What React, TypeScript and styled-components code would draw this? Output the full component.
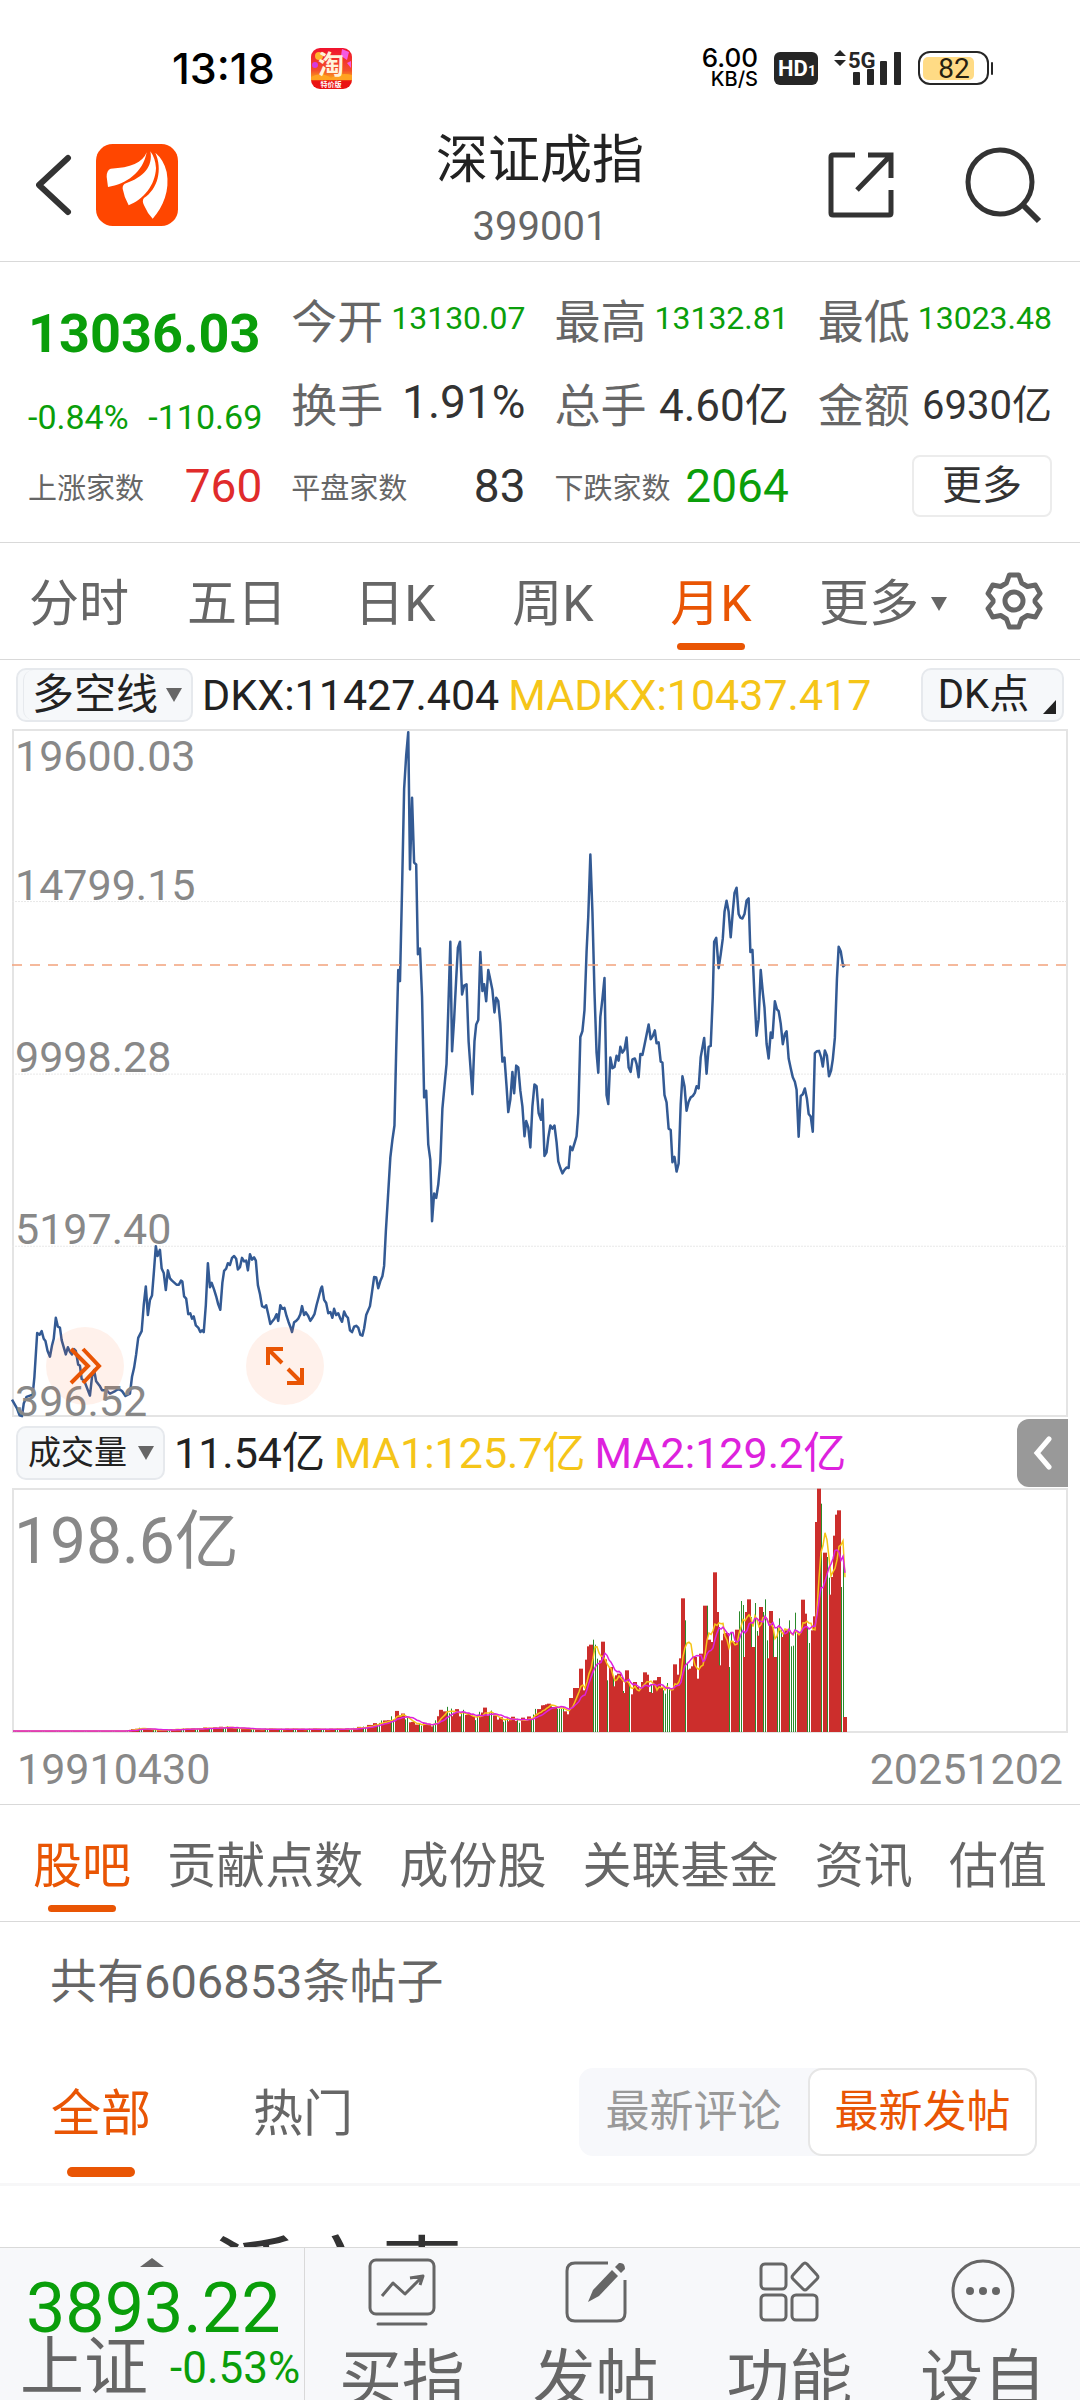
import React from "react";
import styled, { createGlobalStyle, css } from "styled-components";

const color = {
  ink: "#222222",
  dark: "#333333",
  mid: "#666666",
  soft: "#888888",
  faint: "#999999",
  green: "#0a9e0a",
  red: "#e02b2b",
  accent: "#e95504",
  gold: "#f5c518",
  magenta: "#dd22dd",
  line: "#d9d9d9",
  frame: "#e4e4e4",
  panel: "#f7f8fa",
};

const GlobalStyle = createGlobalStyle`
  *, *::before, *::after { box-sizing: border-box; }
  body {
    margin: 0;
    background: #fff;
    color: ${color.dark};
    font-family: Roboto, "Noto Sans CJK SC", sans-serif;
  }
  button, select {
    margin: 0;
    padding: 0;
    border: 0;
    background: none;
    color: inherit;
    font: inherit;
    cursor: pointer;
  }
  a { color: inherit; text-decoration: none; }
  svg { display: block; flex: none; }
  h1, h2, p, dl, dd { margin: 0; font-weight: 400; }
`;

const Shell = styled.div`
  display: flex;
  flex-direction: column;
  height: 100vh;
  overflow: hidden;
`;

/* ---------- status bar ---------- */

const StatusBar = styled.div`
  display: flex;
  flex: none;
  justify-content: space-between;
  align-items: center;
  height: 100px;
  padding: 36px 86px 0 172px;
  color: #000;
  font-family: Inter, "Noto Sans CJK SC", sans-serif;
`;

const StatusGroup = styled.div<{ $gap: number }>`
  display: flex;
  align-items: center;
  gap: ${(p) => p.$gap}px;
`;

const Clock = styled.span`
  font-size: 43px;
  font-weight: 500;
  line-height: 48px;
`;

const NetSpeed = styled.span`
  display: flex;
  flex-direction: column;
  align-items: flex-end;
  font-size: 26px;
  font-weight: 500;
  line-height: 22px;
  small {
    font-size: 20px;
    line-height: 20px;
  }
`;

/* ---------- title bar ---------- */

const Header = styled.header`
  display: grid;
  flex: none;
  grid-template-columns: 1fr auto 1fr;
  height: 162px;
  padding: 22px 36px 0;
  border-bottom: 1px solid ${color.line};
`;

const HeaderSide = styled.div<{ $end?: boolean }>`
  display: flex;
  align-items: center;
  justify-content: ${(p) => (p.$end ? "flex-end" : "flex-start")};
  gap: ${(p) => (p.$end ? 69 : 24)}px;
  height: 126px;
`;

const TitleBlock = styled.div`
  text-align: center;
`;

const Title = styled.h1`
  color: ${color.ink};
  font-size: 52px;
  line-height: 78px;
`;

const Code = styled.p`
  color: ${color.mid};
  font-size: 40px;
  line-height: 54px;
`;

/* ---------- quote ---------- */

const Quote = styled.section`
  display: grid;
  flex: none;
  grid-template-columns: repeat(4, minmax(0, 1fr));
  grid-template-rows: repeat(3, 84px);
  column-gap: 29px;
  padding: 14px 28px;
  border-bottom: 1px solid ${color.line};
`;

const PriceCell = styled.div`
  display: flex;
  flex-direction: column;
  grid-row: span 2;
  justify-content: space-between;
  padding: 20px 0 7px;
  color: ${color.green};
`;

const Price = styled.strong`
  font-size: 54px;
  font-weight: 700;
  line-height: 76px;
`;

const Change = styled.div`
  display: flex;
  justify-content: space-between;
  font-size: 34px;
  line-height: 40px;
`;

const Stat = styled.div`
  display: flex;
  align-items: center;
  justify-content: space-between;
  white-space: nowrap;
`;

const StatName = styled.span<{ $small?: boolean }>`
  color: ${color.mid};
  font-size: ${(p) => (p.$small ? 29 : 46)}px;
`;

const StatValue = styled.span<{ $size: number; $tone: string }>`
  color: ${(p) => p.$tone};
  font-size: ${(p) => p.$size}px;
`;

const MoreButton = styled.button`
  align-self: center;
  justify-self: end;
  width: 140px;
  height: 62px;
  border: 2px solid #ececec;
  border-radius: 8px;
  font-size: 40px;
  line-height: 56px;
`;

/* ---------- tab bars ---------- */

const activeBar = css`
  &::after {
    content: "";
    position: absolute;
    left: 50%;
    bottom: 0;
    width: 68px;
    height: 7px;
    margin-left: -34px;
    border-radius: 4px;
    background: ${color.accent};
  }
`;

const Periods = styled.nav`
  display: grid;
  flex: none;
  grid-template-columns: repeat(6, minmax(0, 158fr)) minmax(0, 132fr);
  align-items: center;
  height: 117px;
  border-bottom: 1px solid ${color.line};
`;

const Period = styled.button<{ $active?: boolean }>`
  position: relative;
  height: 98px;
  padding-top: 6px;
  color: ${(p) => (p.$active ? color.accent : color.mid)};
  font-size: 50px;
  line-height: 92px;
  white-space: nowrap;
  ${(p) => p.$active && activeBar}
`;

const MorePeriods = styled(Period)`
  display: flex;
  align-items: center;
  justify-content: center;
  gap: 12px;
  padding-left: 28px;
`;

const SettingsButton = styled.button`
  display: flex;
  justify-content: center;
`;

const Triangle = styled.i`
  width: 0;
  height: 0;
  border: 8px solid transparent;
  border-top: 14px solid ${color.mid};
  border-bottom: 0;
`;

/* ---------- chart ---------- */

const IndicatorRow = styled.div<{ $height: number }>`
  display: flex;
  flex: none;
  align-items: center;
  gap: 9px;
  height: ${(p) => p.$height}px;
  padding: 0 16px;
  color: ${color.ink};
  font-size: 43px;
  line-height: 56px;
  white-space: nowrap;
`;

const chip = css`
  border: 2px solid #e6e9ed;
  border-radius: 10px;
  background: #f6f8fa;
`;

const Picker = styled.label<{ $nested?: boolean }>`
  ${chip}
  display: flex;
  position: relative;
  align-items: center;
  height: 54px;
  padding-left: ${(p) => (p.$nested ? 5 : 0)}px;
  ${Triangle} {
    position: absolute;
    right: 9px;
    pointer-events: none;
  }
`;

const PickerSelect = styled.select<{ $nested?: boolean }>`
  appearance: none;
  height: 50px;
  padding: ${(p) => (p.$nested ? "0 32px 0 8px" : "0 36px 0 10px")};
  border-left: ${(p) => (p.$nested ? "1px solid #e6e9ed" : "0")};
  border-radius: 10px;
  color: ${color.ink};
  font-size: ${(p) => (p.$nested ? 42 : 33)}px;
  line-height: 50px;
`;

const Reading = styled.span<{ $tone: string }>`
  color: ${(p) => p.$tone};
`;

const DkButton = styled.button`
  ${chip}
  position: relative;
  width: 143px;
  height: 54px;
  margin-left: auto;
  padding-right: 18px;
  font-size: 40px;
  line-height: 50px;
  &::after {
    content: "";
    position: absolute;
    right: 6px;
    bottom: 6px;
    border-left: 13px solid transparent;
    border-bottom: 14px solid ${color.ink};
  }
`;

const Frame = styled.div<{ $height: number }>`
  position: relative;
  flex: none;
  height: ${(p) => p.$height}px;
  margin: 0 12px;
  box-shadow: inset 0 0 0 2px ${color.frame};
  > svg {
    width: 100%;
    height: 100%;
    overflow: visible;
  }
`;

const AxisLabel = styled.span<{ $level: number }>`
  position: absolute;
  left: 3px;
  ${(p) => (p.$level === 4 ? "top: 11px;" : `bottom: ${p.$level * 25}%;`)}
  color: ${color.soft};
  font-size: 43px;
  line-height: 32px;
`;

const VolumeLabel = styled.span`
  position: absolute;
  top: 19px;
  left: 2px;
  color: ${color.soft};
  font-size: 64px;
  line-height: 70px;
`;

const ChartTools = styled.div`
  display: flex;
  position: absolute;
  bottom: 12px;
  left: 34px;
  gap: 122px;
`;

const RoundTool = styled.button`
  display: grid;
  place-items: center;
  width: 78px;
  height: 78px;
  border-radius: 50%;
  background: rgba(255, 98, 30, 0.09);
`;

const Drawer = styled.button`
  display: grid;
  place-items: center;
  width: 51px;
  height: 68px;
  margin: 0 -4px 0 auto;
  border-radius: 12px 0 0 12px;
  background: ${color.faint};
`;

const Dates = styled.div`
  display: flex;
  flex: none;
  justify-content: space-between;
  height: 72px;
  padding: 6px 17px 0;
  border-bottom: 1px solid ${color.line};
  color: ${color.soft};
  font-size: 43px;
  line-height: 60px;
`;

/* ---------- community ---------- */

const Sections = styled.nav`
  display: flex;
  flex: none;
  justify-content: space-between;
  height: 117px;
  padding: 10px 33px 9px;
  border-bottom: 1px solid ${color.line};
`;

const SectionTab = styled.button<{ $active?: boolean }>`
  position: relative;
  padding-top: 7px;
  color: ${(p) => (p.$active ? color.accent : color.mid)};
  font-size: 49px;
  line-height: 90px;
  white-space: nowrap;
  ${(p) => p.$active && activeBar}
`;

const PostCount = styled.p`
  flex: none;
  padding: 26px 50px 0;
  color: ${color.mid};
  font-size: 47px;
  line-height: 68px;
`;

const Filters = styled.div`
  display: flex;
  flex: none;
  align-items: center;
  gap: 102px;
  height: 170px;
  padding: 24px 43px 0 51px;
  border-bottom: 3px solid #f7f7f8;
`;

const FilterTab = styled.button<{ $active?: boolean }>`
  position: relative;
  height: 130px;
  padding-top: 4px;
  color: ${(p) => (p.$active ? color.accent : color.mid)};
  font-size: 50px;
  line-height: 126px;
  ${(p) => p.$active && activeBar}
  &::after {
    height: 10px;
    border-radius: 5px;
  }
`;

const SortSwitch = styled.div`
  display: flex;
  height: 88px;
  margin-left: auto;
  border-radius: 14px;
  background: #f7f8fb;
`;

const SortOption = styled.button<{ $active?: boolean }>`
  width: 229px;
  border: 2px solid ${(p) => (p.$active ? "#e6e6e6" : "transparent")};
  border-radius: 14px;
  background: ${(p) => (p.$active ? "#fff" : "transparent")};
  color: ${(p) => (p.$active ? color.accent : color.faint)};
  font-size: 44px;
  line-height: 80px;
`;

const Feed = styled.main`
  flex: 1;
  min-height: 0;
  overflow: hidden;
  padding: 42px 42px 0 212px;
`;

const Author = styled.h2`
  color: ${color.dark};
  font-size: 84px;
  line-height: 100px;
`;

/* ---------- bottom bar ---------- */

const BottomBar = styled.footer`
  display: flex;
  flex: none;
  height: 153px;
  overflow: hidden;
  border-top: 1px solid ${color.line};
  background: ${color.panel};
`;

const IndexCell = styled.button`
  display: flex;
  flex: none;
  flex-direction: column;
  align-items: flex-start;
  width: 305px;
  padding: 10px 0 0 20px;
  border-right: 1px solid ${color.line};
  white-space: nowrap;
`;

const UpCaret = styled.i`
  align-self: center;
  margin-right: 20px;
  border: 12px solid transparent;
  border-top: 0;
  border-bottom: 9px solid ${color.mid};
`;

const IndexValue = styled.span`
  margin: 11px 0 0 6px;
  color: ${color.green};
  font-size: 70px;
  line-height: 60px;
`;

const IndexLine = styled.span`
  display: flex;
  align-items: center;
  gap: 22px;
  color: ${color.mid};
  font-size: 64px;
  line-height: 60px;
  span {
    color: ${color.green};
    font-size: 44px;
  }
`;

const Action = styled.button`
  display: flex;
  flex: 1;
  flex-direction: column;
  align-items: center;
  justify-content: flex-start;
  gap: 22px;
  padding-top: 10px;
  color: ${color.mid};
  font-size: 63px;
  line-height: 64px;
`;

/* ---------- data ---------- */

// Monthly close, in plot units: x runs left to right, y downwards.
const PLOT = { x: 36, y: 21, width: 3062, height: 1539 };
const priceLine =
  "36,1521 50,1540 58,1556 65,1558 70,1530 78,1515 96,1510 101,1470 109,1372 116,1376 122,1368 128,1385 133,1390 139,1412 146,1425 152,1400 157,1385 163,1338 169,1358 175,1360 180,1388 192,1420 198,1404 204,1414 210,1420 216,1408 221,1412 228,1443 233,1445 238,1475 245,1478 262,1512 268,1470 274,1455 280,1480 290,1490 297,1500 310,1500 320,1508 335,1502 345,1497 355,1502 365,1513 378,1508 384,1470 390,1450 396,1420 402,1383 412,1368 418,1310 424,1268 430,1332 436,1298 442,1288 447,1240 453,1178 458,1200 465,1186 470,1228 476,1238 482,1276 488,1232 494,1250 500,1255 513,1264 520,1264 526,1255 530,1257 535,1290 541,1295 547,1330 553,1328 558,1340 563,1335 569,1355 576,1360 582,1370 587,1366 592,1370 598,1310 604,1216 610,1270 615,1260 622,1275 628,1290 634,1308 640,1320 646,1260 651,1233 657,1228 662,1216 668,1220 674,1204 680,1200 686,1206 691,1230 697,1225 703,1204 709,1212 715,1210 720,1232 726,1196 732,1208 738,1203 743,1210 749,1265 755,1285 761,1312 768,1315 773,1310 779,1330 785,1352 791,1346 797,1340 803,1330 808,1345 814,1310 820,1318 826,1316 832,1334 838,1348 843,1358 848,1370 854,1348 860,1345 866,1340 872,1330 877,1312 883,1332 888,1326 895,1334 901,1345 907,1338 913,1330 919,1310 926,1290 932,1272 935,1268 941,1298 947,1305 953,1328 959,1325 965,1338 970,1318 976,1332 982,1328 988,1340 993,1347 999,1324 1005,1334 1010,1338 1016,1366 1022,1370 1028,1358 1034,1356 1040,1360 1046,1376 1052,1378 1057,1362 1063,1332 1074,1312 1080,1280 1086,1247 1092,1248 1098,1272 1104,1256 1110,1245 1115,1222 1120,1145 1126,1070 1133,980 1139,940 1145,908 1150,740 1156,560 1161,585 1167,380 1173,155 1179,80 1185,28 1190,335 1196,175 1202,320 1208,324 1213,525 1219,512 1225,620 1231,845 1237,830 1243,950 1249,985 1254,1122 1260,1060 1266,1070 1272,1040 1278,990 1284,870 1290,820 1296,770 1301,650 1307,497 1312,742 1318,670 1324,580 1329,510 1335,497 1341,615 1347,595 1354,592 1360,720 1371,838 1377,720 1382,682 1388,672 1394,520 1400,607 1405,592 1411,630 1417,560 1423,582 1429,605 1435,655 1440,622 1446,630 1452,680 1458,765 1464,756 1470,820 1475,878 1481,850 1487,788 1492,836 1498,774 1504,778 1510,830 1516,865 1522,932 1527,898 1533,912 1539,957 1545,865 1551,816 1557,820 1563,880 " +
  "1570,895 1574,850 1580,976 1586,968 1591,935 1597,908 1603,915 1609,908 1615,945 1620,988 1626,1003 1632,1015 1638,1007 1644,1002 1650,1003 1655,955 1661,963 1667,948 1673,932 1678,880 1684,710 1690,697 1696,650 1702,520 1707,440 1713,302 1719,430 1725,610 1731,745 1736,790 1742,665 1748,625 1754,578 1760,840 1765,860 1771,756 1777,780 1783,777 1789,752 1795,763 1800,732 1806,745 1812,738 1818,711 1824,778 1830,788 1835,760 1842,758 1847,770 1853,800 1858,748 1864,750 1870,728 1876,705 1882,682 1888,715 1894,708 1900,695 1905,724 1911,722 1917,765 1922,767 1928,840 1934,856 1940,915 1946,918 1951,990 1957,978 1963,1011 1969,993 1975,860 1980,798 1986,820 1992,875 1998,855 2004,845 2010,842 2016,835 2021,820 2027,825 2033,755 2043,712 2050,792 2056,732 2062,730 2068,620 2072,497 2078,488 2085,556 2091,525 2097,490 2102,430 2108,405 2114,430 2120,487 2126,430 2131,388 2137,376 2143,435 2148,443 2154,445 2160,435 2166,405 2172,400 2177,520 2183,515 2189,620 2195,707 2201,670 2207,560 2213,610 2218,645 2224,725 2230,758 2236,700 2241,712 2248,630 2254,648 2259,652 2265,680 2271,726 2277,703 2282,697 2288,758 2294,780 2300,800 2306,810 2311,828 2317,933 2323,842 2329,838 2335,825 2341,848 2346,882 2352,888 2358,922 2364,746 2370,742 2376,741 2382,755 2387,776 2393,740 2399,752 2405,798 2411,785 2416,760 2422,712 2428,580 2433,508 2439,518 2446,552 2452,548";

const axis = [
  { level: 4, text: "19600.03" },
  { level: 3, text: "14799.15" },
  { level: 2, text: "9998.28" },
  { level: 1, text: "5197.40" },
  { level: 0, text: "396.52" },
];

type Bar = { height: number; up: boolean };

// Typical volume of the early years: [month index, bar height].
const earlyVolume: [number, number][] = [
  [0, 1], [55, 1], [64, 4], [72, 2], [98, 4], [106, 5], [120, 3], [135, 3], [150, 3],
  [165, 3], [172, 4], [181, 8], [187, 12], [192, 19], [197, 14], [201, 8], [210, 8],
  [214, 20], [219, 23], [225, 20], [229, 15], [236, 22], [243, 14], [252, 13],
  [258, 14], [262, 22], [266, 24],
];

// Recent volume, one entry a month; a negative value is a falling month.
const recentVolume = [
  80, 80, 83, 85, -77, 75, 73, -70, -70, -70, -75, 62, 53, -60, 102, -107, 132, 125, 132, 190,
  125, 87, 217, 257, 262, -277, -262, -220, -165, 215, 271, 218, -155, -117, 195, -165, 137,
  170, 175, 165, -123, 117, 185, -143, -95, 113, 150, 135, -125, 130, 150, 179, 172, 120, -143,
  117, 155, 93, 165, 135, -125, -115, -147, -130, -113, 130, 203, -135, 172, 221, 401, -335,
  -205, 187, 190, 197, 225, 160, -167, 235, -215, 379, -379, 277, -213, 270, 479, 360, -315,
  200, 275, 295, 297, -195, -300, 270, 245, 307, -362, -393, -381, 225, 360, 398, -345, 255,
  -387, -303, 289, 375, -360, -398, -275, 221, 363, -315, 225, -315, -341, -305, 285, 300, 305,
  -335, -257, -259, -358, -290, 295, 300, 397, 355, -315, -267, -297, 305, 347, 630, 730, -685,
  -405, 538, -525, -463, 412, 465, 589, 652, 665, -435, -525, 45,
];

function buildVolume(): Bar[] {
  const bars: Bar[] = [];
  for (let month = 0; month < 265; month++) {
    const next = earlyVolume.findIndex(([m]) => m > month);
    const [m0, v0] = earlyVolume[next - 1];
    const [m1, v1] = earlyVolume[next];
    const base = v0 + ((v1 - v0) * (month - m0)) / (m1 - m0);
    const swing = 0.7 + (((month * 37) % 11) / 11) * 0.5;
    bars.push({ height: Math.max(1, base * swing), up: (month * 29) % 7 > 2 });
  }
  recentVolume.forEach((v) => bars.push({ height: Math.abs(v) / 3, up: v > 0 }));
  return bars;
}

const volume = buildVolume();

function average(span: number) {
  return volume
    .map((_, i) => {
      const part = volume.slice(Math.max(0, i - span + 1), i + 1);
      const mean = part.reduce((sum, bar) => sum + bar.height, 0) / part.length;
      return `${i * 2 + 1},${(244 - mean).toFixed(1)}`;
    })
    .join(" ");
}

const stats = [
  { name: "今开", value: "13130.07", size: 32, tone: color.green },
  { name: "最高", value: "13132.81", size: 32, tone: color.green },
  { name: "最低", value: "13023.48", size: 32, tone: color.green },
  { name: "换手", value: "1.91%", size: 46, tone: color.dark },
  { name: "总手", value: "4.60亿", size: 44, tone: color.dark },
  { name: "金额", value: "6930亿", size: 40, tone: color.dark },
  { name: "上涨家数", value: "760", size: 46, tone: color.red, small: true },
  { name: "平盘家数", value: "83", size: 46, tone: color.dark, small: true },
  { name: "下跌家数", value: "2064", size: 46, tone: color.green, small: true },
];

const periods = ["分时", "五日", "日K", "周K", "月K"];
const sections = ["股吧", "贡献点数", "成份股", "关联基金", "资讯", "估值"];

/* ---------- icons ---------- */

const ShoppingBadge = () => (
  <svg width="41" height="41" viewBox="0 0 41 41" aria-hidden="true">
    <defs>
      <linearGradient id="badge" x1="0" y1="0" x2="0" y2="1">
        <stop offset="0" stopColor="#f0122d" />
        <stop offset="0.55" stopColor="#f4502a" />
        <stop offset="0.72" stopColor="#f99a1c" />
        <stop offset="0.82" stopColor="#ea1212" />
      </linearGradient>
    </defs>
    <rect width="41" height="41" rx="9" fill="url(#badge)" />
    <circle cx="8" cy="8" r="4" fill="#ffb52e" />
    <circle cx="4" cy="17" r="3" fill="#d43be0" />
    <path d="M31 1l7 3-2 8-6-4zM36 15l4-2v7z" fill="#f55be0" />
    <path d="M0 29q10-6 20 1 10-6 21-3v5H0z" fill="#ffa321" />
    <text x="20" y="26" fontSize="26" fontWeight="700" textAnchor="middle" fill="#fff3dc">淘</text>
    <text x="20" y="39" fontSize="7" fontWeight="700" textAnchor="middle" fill="#fff">特价版</text>
  </svg>
);

const HdIcon = () => (
  <svg width="44" height="33" viewBox="0 0 44 33" aria-hidden="true">
    <rect width="44" height="33" rx="6" fill="#262626" />
    <text x="4" y="24" fontFamily="Roboto" fontSize="22" fontWeight="700" fill="#fff">HD</text>
    <text x="34" y="24" fontFamily="Roboto" fontSize="14" fontWeight="700" fill="#fff">1</text>
  </svg>
);

const SignalIcon = () => (
  <svg width="68" height="38" viewBox="0 0 68 38" fill="#262626" aria-hidden="true">
    <path d="M0 7l6-6 6 6zM0 11h12l-6 6z" />
    <text x="14" y="19" fontFamily="Roboto" fontSize="22" fontWeight="700">5G</text>
    <rect x="19" y="23" width="7" height="13" rx="1" />
    <rect x="33" y="20" width="7" height="16" rx="1" />
    <rect x="46" y="12" width="7" height="24" rx="1" />
    <rect x="60" y="3" width="7" height="33" rx="1" />
  </svg>
);

const BatteryIcon = () => (
  <svg width="76" height="34" viewBox="0 0 76 34" aria-hidden="true">
    <rect x="1" y="1" width="69" height="32" rx="11" fill="none" stroke="#262626" strokeWidth="2" />
    <rect x="5" y="6" width="51" height="23" rx="5" fill="#ffdb85" />
    <rect x="73" y="11" width="2" height="13" rx="1" fill="#262626" />
    <text x="36" y="27" fontFamily="Roboto" fontSize="28" textAnchor="middle" fill="#262011">82</text>
  </svg>
);

const BackIcon = () => (
  <svg width="36" height="62" viewBox="2 0 36 62" fill="none" stroke={color.dark} strokeWidth="6" strokeLinecap="round" strokeLinejoin="round">
    <path d="M34 4L5 31l29 27" />
  </svg>
);

const AppLogo = () => (
  <svg width="82" height="82" viewBox="0 0 246 246" role="img" aria-label="东方财富">
    <rect width="246" height="246" rx="50" fill="#ff4600" />
    <g fill="#fff">
      <path d="M152 25C140 56 104 72 44 74Q32 78 32 98L36 129C90 122 142 84 152 25z" />
      <path d="M163 22C172 68 142 100 90 118Q79 122 80 134Q84 158 98 184C142 166 178 124 180 72Q178 42 163 22z" />
      <path d="M178 26C200 76 186 134 144 162Q137 170 144 184Q154 208 170 224C202 188 222 140 212 84Q204 48 178 26z" />
    </g>
  </svg>
);

const ShareIcon = () => (
  <svg width="68" height="68" viewBox="0 0 68 68" fill="none" stroke={color.dark} strokeWidth="5">
    <path d="M28 4H6Q4 4 4 6v56q0 2 2 2h56q2 0 2-2V39" />
    <path d="M41 4h23v23M63 5L30 39" />
  </svg>
);

const SearchIcon = () => (
  <svg width="80" height="80" viewBox="0 0 80 80" fill="none" stroke={color.dark} strokeWidth="5">
    <circle cx="36" cy="37" r="32" />
    <path d="M59 60l16 16" strokeWidth="6" />
  </svg>
);

const GearIcon = () => (
  <svg width="58" height="60" viewBox="0 0 58 60" fill="none" stroke={color.mid} strokeWidth="5" strokeLinejoin="round">
    <path d="M24 4h10l3 8 6 3.500 8.500-1.500 5 8.500-5.500 6.500v2l5.500 6.500-5 8.500-8.500-1.500-6 3.500-3 8H24l-3-8-6-3.500-8.500 1.500-5-8.500L7 31v-2l-5.500-6.500 5-8.500 8.500 1.500 6-3.500z" transform="translate(1.500 0) scale(.95 1)" />
    <circle cx="29" cy="30" r="9" />
  </svg>
);

const ForwardIcon = () => (
  <svg width="34" height="38" viewBox="0 0 34 38" fill="none" stroke={color.accent} strokeWidth="4">
    <path d="M3 2l17 17L3 36M15 2l16 17-16 17" />
  </svg>
);

const ExpandIcon = () => (
  <svg width="38" height="38" viewBox="0 0 38 38" fill="none" stroke={color.accent} strokeWidth="4">
    <path d="M17 2H2v16M3 3l13 13M21 36h15V21M35 35L22 22" />
  </svg>
);

const DrawerIcon = () => (
  <svg width="20" height="34" viewBox="0 0 20 34" fill="none" stroke="#fff" strokeWidth="5" strokeLinecap="round">
    <path d="M16 3L4 17l12 14" />
  </svg>
);

const iconStroke = { fill: "none", stroke: color.mid, strokeWidth: 3, strokeLinejoin: "round" as const };

const TradeIcon = () => (
  <svg width="68" height="68" viewBox="0 0 68 68" {...iconStroke}>
    <rect x="2" y="2" width="64" height="54" rx="6" />
    <path d="M14 38l11-13 12 11 17-17M42 20l13-2-3 9" />
    <path d="M10 66h48" strokeLinecap="round" />
  </svg>
);

const PostIcon = () => (
  <svg width="68" height="68" viewBox="0 0 68 68" {...iconStroke}>
    <path d="M46 5H13Q5 5 5 13v42q0 8 8 8h42q8 0 8-8V22" />
    <path d="M26 44l5-12 19-20 6 6-19 20z" fill={color.mid} stroke="none" />
    <path d="M53 9l4-4q6-1 6 6l-4 4z" fill={color.mid} stroke="none" />
  </svg>
);

const ToolsIcon = () => (
  <svg width="68" height="68" viewBox="0 0 68 68" {...iconStroke}>
    <rect x="6" y="6" width="25" height="25" rx="4" />
    <rect x="6" y="37" width="25" height="25" rx="4" />
    <rect x="37" y="37" width="25" height="25" rx="4" />
    <path d="M48 6Q50 4 52 6L62 17Q64 19 62 21L52 31Q50 33 48 31L38 21Q36 19 38 17z" />
  </svg>
);

const SetIcon = () => (
  <svg width="68" height="68" viewBox="0 0 68 68" {...iconStroke}>
    <circle cx="34" cy="33" r="30" />
    <g fill={color.mid} stroke="none">
      <circle cx="21" cy="33" r="4" />
      <circle cx="34" cy="33" r="4" />
      <circle cx="47" cy="33" r="4" />
    </g>
  </svg>
);

const actions = [
  { label: "买指", Icon: TradeIcon },
  { label: "发帖", Icon: PostIcon },
  { label: "功能", Icon: ToolsIcon },
  { label: "设自", Icon: SetIcon },
];

/* ---------- charts ---------- */

function PriceChart() {
  const right = PLOT.x + PLOT.width;
  return (
    <Frame $height={688}>
      <svg viewBox={`${PLOT.x} ${PLOT.y} ${PLOT.width} ${PLOT.height}`} preserveAspectRatio="none" role="img" aria-label="月K走势">
        {[407, 793, 1178].map((y) => (
          <path key={y} d={`M${PLOT.x} ${y}H${right}`} stroke="#e8e8e8" strokeWidth="1" strokeDasharray="2 1" vectorEffect="non-scaling-stroke" />
        ))}
        <polyline points={priceLine} fill="none" stroke="#335a94" strokeWidth="2.500" strokeLinejoin="round" vectorEffect="non-scaling-stroke" />
        <path d={`M${PLOT.x} 549H${right}`} stroke="#f2a27c" strokeWidth="1.500" strokeDasharray="10 8" vectorEffect="non-scaling-stroke" />
      </svg>
      {axis.map((mark) => (
        <AxisLabel key={mark.level} $level={mark.level}>{mark.text}</AxisLabel>
      ))}
      <ChartTools>
        <RoundTool aria-label="前进"><ForwardIcon /></RoundTool>
        <RoundTool aria-label="全屏"><ExpandIcon /></RoundTool>
      </ChartTools>
    </Frame>
  );
}

function VolumeChart() {
  return (
    <Frame $height={245}>
      <svg viewBox="0 0 1056 245" preserveAspectRatio="none" role="img" aria-label="成交量">
        {volume.map((bar, i) => (
          <rect
            key={i}
            x={bar.up ? i * 2 - 1 : i * 2 + 1}
            y={244 - bar.height}
            width={bar.up ? 4 : 1}
            height={bar.height}
            fill={bar.up ? "#cc2e2c" : "#2a8a2a"}
          />
        ))}
        <polyline points={average(5)} fill="none" stroke={color.gold} strokeWidth="1.500" />
        <polyline points={average(10)} fill="none" stroke={color.magenta} strokeWidth="1.500" />
      </svg>
      <VolumeLabel>198.6亿</VolumeLabel>
    </Frame>
  );
}

export default function App() {
  return (
    <Shell>
      <GlobalStyle />
      <StatusBar>
        <StatusGroup $gap={36}>
          <Clock>13:18</Clock>
          <ShoppingBadge />
        </StatusGroup>
        <StatusGroup $gap={16}>
          <NetSpeed>6.00<small>KB/S</small></NetSpeed>
          <HdIcon />
          <SignalIcon />
          <BatteryIcon />
        </StatusGroup>
      </StatusBar>

      <Header>
        <HeaderSide>
          <button aria-label="返回"><BackIcon /></button>
          <AppLogo />
        </HeaderSide>
        <TitleBlock>
          <Title>深证成指</Title>
          <Code>399001</Code>
        </TitleBlock>
        <HeaderSide $end>
          <button aria-label="分享"><ShareIcon /></button>
          <button aria-label="搜索"><SearchIcon /></button>
        </HeaderSide>
      </Header>

      <Quote>
        <PriceCell>
          <Price>13036.03</Price>
          <Change><span>-0.84%</span><span>-110.69</span></Change>
        </PriceCell>
        {stats.map((s) => (
          <Stat key={s.name}>
            <StatName $small={s.small}>{s.name}</StatName>
            <StatValue $size={s.size} $tone={s.tone}>{s.value}</StatValue>
          </Stat>
        ))}
        <MoreButton>更多</MoreButton>
      </Quote>

      <Periods>
        {periods.map((p) => (
          <Period key={p} $active={p === "月K"}>{p}</Period>
        ))}
        <MorePeriods>更多<Triangle /></MorePeriods>
        <SettingsButton aria-label="设置"><GearIcon /></SettingsButton>
      </Periods>

      <IndicatorRow $height={69}>
        <Picker $nested>
          <PickerSelect $nested aria-label="主图指标"><option>多空线</option></PickerSelect>
          <Triangle />
        </Picker>
        <Reading $tone={color.ink}>DKX:11427.404</Reading>
        <Reading $tone={color.gold}>MADKX:10437.417</Reading>
        <DkButton>DK点</DkButton>
      </IndicatorRow>
      <PriceChart />
      <IndicatorRow $height={71}>
        <Picker>
          <PickerSelect aria-label="副图指标"><option>成交量</option></PickerSelect>
          <Triangle />
        </Picker>
        <Reading $tone={color.ink}>11.54亿</Reading>
        <Reading $tone={color.gold}>MA1:125.7亿</Reading>
        <Reading $tone={color.magenta}>MA2:129.2亿</Reading>
        <Drawer aria-label="展开"><DrawerIcon /></Drawer>
      </IndicatorRow>
      <VolumeChart />
      <Dates><span>19910430</span><span>20251202</span></Dates>

      <Sections>
        {sections.map((s, i) => (
          <SectionTab key={s} $active={i === 0}>{s}</SectionTab>
        ))}
      </Sections>
      <PostCount>共有606853条帖子</PostCount>
      <Filters>
        <FilterTab $active>全部</FilterTab>
        <FilterTab>热门</FilterTab>
        <SortSwitch>
          <SortOption>最新评论</SortOption>
          <SortOption $active>最新发帖</SortOption>
        </SortSwitch>
      </Filters>
      <Feed>
        <Author>活文喜</Author>
      </Feed>

      <BottomBar>
        <IndexCell>
          <UpCaret />
          <IndexValue>3893.22</IndexValue>
          <IndexLine>上证<span>-0.53%</span></IndexLine>
        </IndexCell>
        {actions.map(({ label, Icon }) => (
          <Action key={label}><Icon />{label}</Action>
        ))}
      </BottomBar>
    </Shell>
  );
}
